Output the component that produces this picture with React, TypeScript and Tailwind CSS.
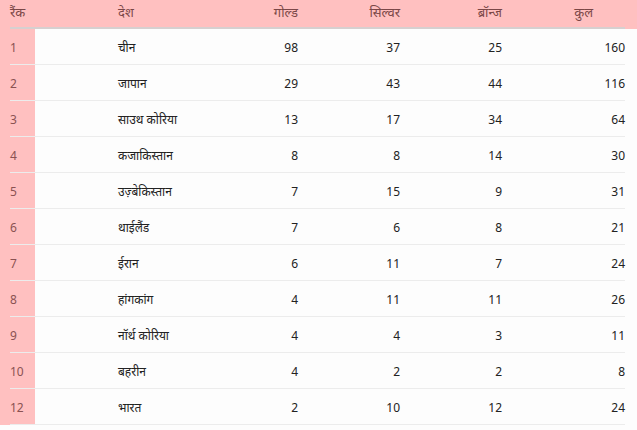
const rows = [
  { rank: 1, country: 'चीन', gold: 98, silver: 37, bronze: 25, total: 160 },
  { rank: 2, country: 'जापान', gold: 29, silver: 43, bronze: 44, total: 116 },
  { rank: 3, country: 'साउथ कोरिया', gold: 13, silver: 17, bronze: 34, total: 64 },
  { rank: 4, country: 'कजाकिस्तान', gold: 8, silver: 8, bronze: 14, total: 30 },
  { rank: 5, country: 'उज़्बेकिस्तान', gold: 7, silver: 15, bronze: 9, total: 31 },
  { rank: 6, country: 'थाईलैंड', gold: 7, silver: 6, bronze: 8, total: 21 },
  { rank: 7, country: 'ईरान', gold: 6, silver: 11, bronze: 7, total: 24 },
  { rank: 8, country: 'हांगकांग', gold: 4, silver: 11, bronze: 11, total: 26 },
  { rank: 9, country: 'नॉर्थ कोरिया', gold: 4, silver: 4, bronze: 3, total: 11 },
  { rank: 10, country: 'बहरीन', gold: 4, silver: 2, bronze: 2, total: 8 },
  { rank: 12, country: 'भारत', gold: 2, silver: 10, bronze: 12, total: 24 },
]

const cols = 'grid grid-cols-[108px_130px_50px_102px_102px_123px]'

export default function App() {
  return (
    <div
      className="h-[430px] w-[637px] overflow-hidden bg-[#fdfdfd] text-[12px]"
      style={{ fontFamily: '"Noto Sans", "Open Sans", sans-serif' }}
    >
      <div className="h-[29px] bg-[#ffc0c0] pl-[10px] text-[13px] text-[#7a4747]">
        <div className={`${cols} h-full w-[615px] items-center border-b-2 border-[#d6d0d0] pb-[2px]`}>
          <div>रैंक</div>
          <div>देश</div>
          <div className="text-right">गोल्ड</div>
          <div className="text-right">सिल्वर</div>
          <div className="text-right">ब्रॉन्ज</div>
          <div className="pr-[32px] text-right">कुल</div>
        </div>
      </div>

      <div className="bg-[linear-gradient(to_right,#ffc0c0_35px,#fdfdfd_35px)] pl-[10px]">
        {rows.map((r) => (
          <div
            key={r.rank}
            className={`${cols} h-[36px] w-[615px] items-center border-b border-[#ececec] pt-[2px] text-[#222]`}
          >
            <div className="text-[#8a5252]">{r.rank}</div>
            <div>{r.country}</div>
            <div className="text-right">{r.gold}</div>
            <div className="text-right">{r.silver}</div>
            <div className="text-right">{r.bronze}</div>
            <div className="text-right">{r.total}</div>
          </div>
        ))}
      </div>
    </div>
  )
}
